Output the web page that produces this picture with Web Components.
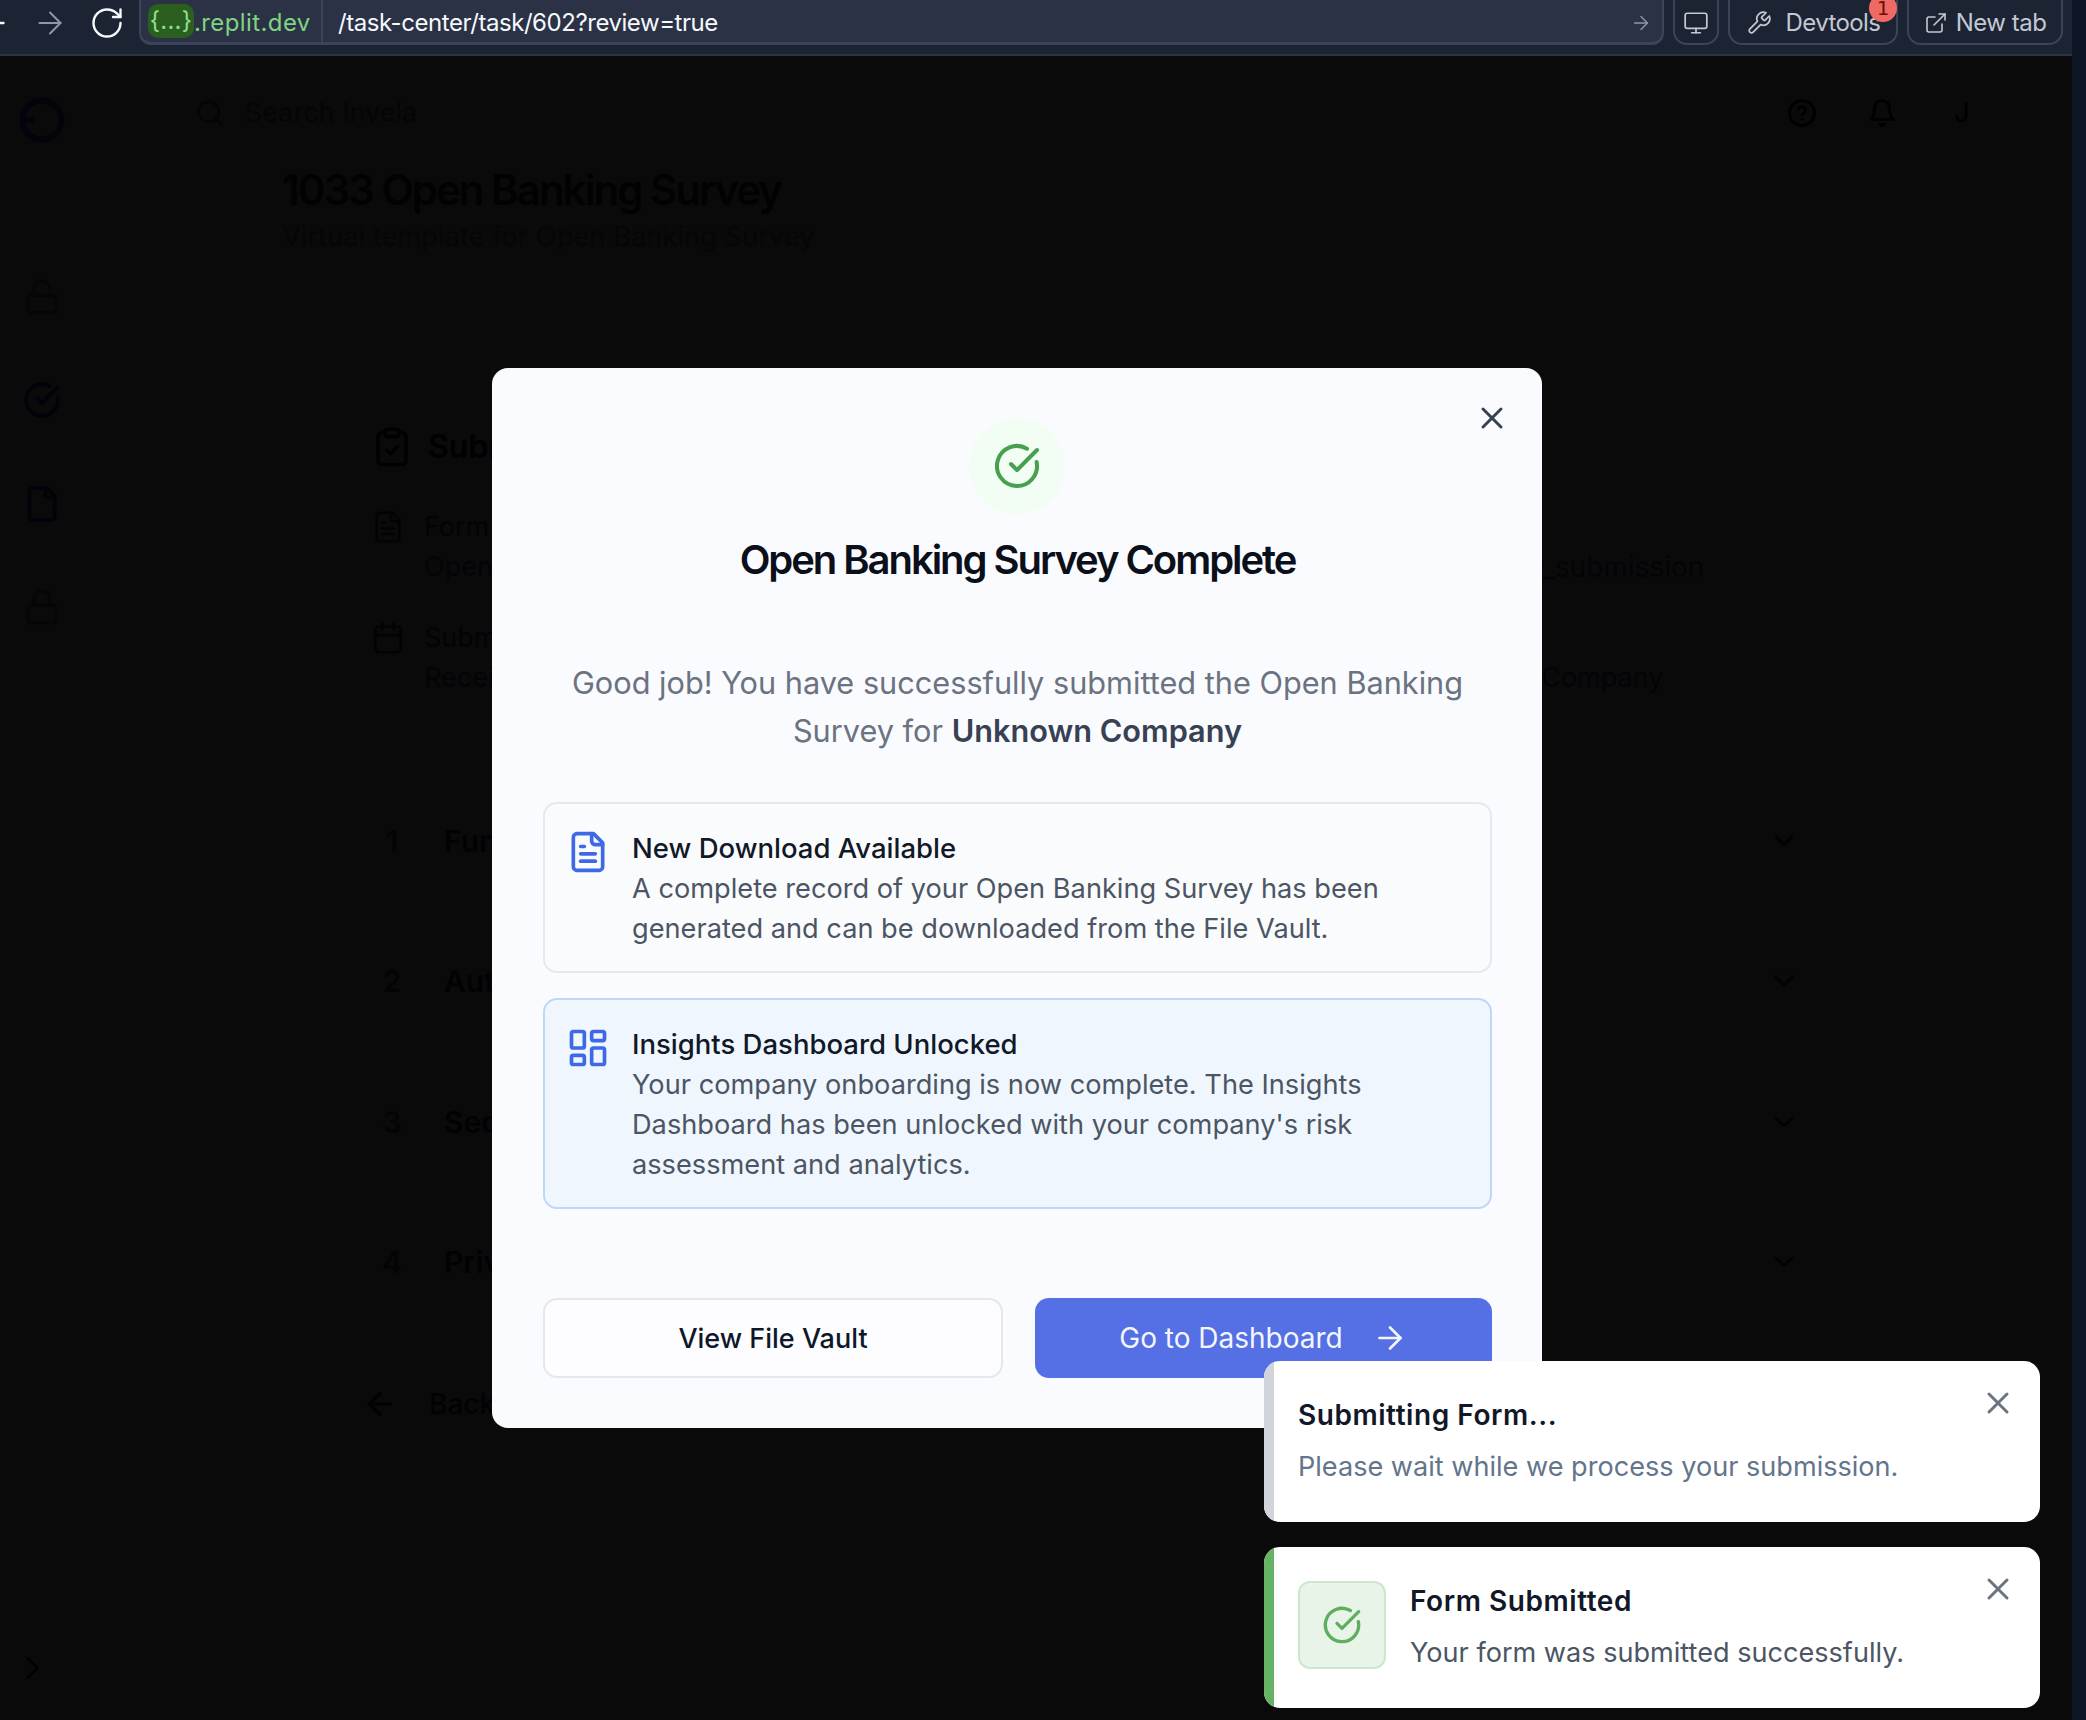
<!DOCTYPE html>
<html lang="en"><head><meta charset="utf-8"><title>Open Banking Survey</title>
<style>
html,body{margin:0;padding:0;background:#0e1525;height:100%;overflow:hidden}
body{font-family:Inter,"Noto Sans",sans-serif}
</style></head><body>
<app-root>
  <browser-bar slot="bar"></browser-bar>
  <side-nav slot="nav"></side-nav>
  <page-main slot="main"></page-main>
  <success-modal slot="over"></success-modal>
  <toast-stack slot="over">
    <toast-card accent="#d1d5db" heading="Submitting Form...">Please wait while we process your submission.</toast-card>
    <toast-card accent="#66b366" heading="Form Submitted" success>Your form was submitted successfully.</toast-card>
  </toast-stack>
</app-root>
<script>
const P={
 check:'<path d="M21.801 10A10 10 0 1 1 17 3.335"/><path d="m9 11 3 3L22 4"/>',
 filetext:'<path d="M15 2H6a2 2 0 0 0-2 2v16a2 2 0 0 0 2 2h12a2 2 0 0 0 2-2V7Z"/><path d="M14 2v4a2 2 0 0 0 2 2h4"/><path d="M10 9H8"/><path d="M16 13H8"/><path d="M16 17H8"/>',
 dash:'<rect x="3" y="3" width="7" height="9" rx="1"/><rect x="14" y="3" width="7" height="5" rx="1"/><rect x="14" y="12" width="7" height="9" rx="1"/><rect x="3" y="16" width="7" height="5" rx="1"/>',
 x:'<path d="M18 6 6 18"/><path d="m6 6 12 12"/>',
 right:'<path d="M5 12h14"/><path d="m12 5 7 7-7 7"/>',
 left:'<path d="m12 19-7-7 7-7"/><path d="M19 12H5"/>',
 reload:'<path d="M21 12a9 9 0 1 1-9-9c2.52 0 4.93 1 6.74 2.74L21 8"/><path d="M21 3v5h-5"/>',
 monitor:'<rect x="2" y="3" width="20" height="14" rx="2"/><path d="M8 21h8"/><path d="M12 17v4"/>',
 wrench:'<path d="M14.7 6.3a1 1 0 0 0 0 1.4l1.6 1.6a1 1 0 0 0 1.4 0l3.77-3.77a6 6 0 0 1-7.94 7.94l-6.91 6.91a2.12 2.12 0 0 1-3-3l6.91-6.91a6 6 0 0 1 7.94-7.94l-3.76 3.76z"/>',
 ext:'<path d="M15 3h6v6"/><path d="M10 14 21 3"/><path d="M18 13v6a2 2 0 0 1-2 2H5a2 2 0 0 1-2-2V8a2 2 0 0 1 2-2h6"/>',
 lock:'<rect x="3" y="11" width="18" height="11" rx="2"/><path d="M7 11V7a5 5 0 0 1 10 0v4"/>',
 file:'<path d="M15 2H6a2 2 0 0 0-2 2v16a2 2 0 0 0 2 2h12a2 2 0 0 0 2-2V7Z"/><path d="M14 2v4a2 2 0 0 0 2 2h4"/>',
 clip:'<rect x="8" y="2" width="8" height="4" rx="1"/><path d="M16 4h2a2 2 0 0 1 2 2v14a2 2 0 0 1-2 2H6a2 2 0 0 1-2-2V6a2 2 0 0 1 2-2h2"/><path d="m9 14 2 2 4-4"/>',
 cal:'<path d="M8 2v4"/><path d="M16 2v4"/><rect x="3" y="4" width="18" height="18" rx="2"/><path d="M3 10h18"/>',
 search:'<circle cx="11" cy="11" r="8"/><path d="m21 21-4.3-4.3"/>',
 help:'<circle cx="12" cy="12" r="10"/><path d="M9.09 9a3 3 0 0 1 5.83 1c0 2-3 3-3 3"/><path d="M12 17h.01"/>',
 bell:'<path d="M6 8a6 6 0 0 1 12 0c0 7 3 9 3 9H3s3-2 3-9"/><path d="M10.3 21a1.94 1.94 0 0 0 3.4 0"/>',
 down:'<path d="m6 9 6 6 6-6"/>',
 chev:'<path d="m9 18 6-6-6-6"/>',
 logo:'<path d="M3.2 14A9 9 0 1 0 3.2 10"/><path d="M3 12h4"/>'
};
function def(name,html,extra){
  const t=document.createElement('template');t.innerHTML=html;
  customElements.define(name,class extends HTMLElement{
    constructor(){super();this.attachShadow({mode:'open'});
      if(extra&&extra.build){this.shadowRoot.innerHTML=extra.build(this);}
      else this.shadowRoot.appendChild(t.content.cloneNode(true));}
  });
}
customElements.define('x-icon',class extends HTMLElement{
  constructor(){super();this.attachShadow({mode:'open'});}
  connectedCallback(){
    const s=this.getAttribute('size')||24,w=this.getAttribute('stroke')||2;
    this.shadowRoot.innerHTML=`<style>:host{display:inline-flex;flex:none;width:${s}px;height:${s}px}svg{display:block}</style><svg xmlns="http://www.w3.org/2000/svg" width="${s}" height="${s}" viewBox="0 0 24 24" fill="none" stroke="currentColor" stroke-width="${w}" stroke-linecap="round" stroke-linejoin="round">${P[this.getAttribute('name')]}</svg>`;
  }
});

def('app-root',`<style>
:host{display:block;position:relative;width:2086px;height:1720px;background:#0e1525;overflow:hidden}
.frame{width:2072px;height:1720px;display:grid;grid-template-rows:56px 1fr;grid-template-columns:172px 1fr;background:#0a0a0a}
.bar{grid-column:1/3}
</style><div class="frame"><div class="bar"><slot name="bar"></slot></div><slot name="nav"></slot><slot name="main"></slot></div><slot name="over"></slot>`);

def('browser-bar',`<style>
:host{display:flex;align-items:flex-start;box-sizing:border-box;height:56px;background:#1c2333;border-bottom:2px solid #2b3245;color:#f5f9fc;font:400 24px/1 Inter,sans-serif;overflow:visible}
.nav{display:flex;align-items:center;height:45px}
.back{margin-left:-25px;color:#f5f9fc}
.fwd{margin-left:21px;color:#8f96a6}
.rel{margin-left:21px;margin-right:14px;color:#f5f9fc}
.url{box-sizing:border-box;width:1525px;height:45px;background:#2b3245;border:solid #3c445c;border-width:0 2px 3px 2px;border-radius:0 0 12px 12px;display:flex;align-items:center;color:#f5f9fc;padding-top:3px}
.dom{display:flex;align-items:center;padding-left:7px;width:182px;box-sizing:border-box;border-right:2px solid #3c445c;color:#7fd483;flex:none;letter-spacing:.4px;margin-top:-3px;padding-top:3px;height:calc(100% + 3px)}
.chip{background:#2b5f20;color:#8ee08e;border-radius:10px;height:34px;width:46px;display:flex;align-items:center;justify-content:center;font-size:24px;margin-top:-3px;letter-spacing:.3px}
.path{padding-left:15px;flex:1;letter-spacing:-.45px}
.go{color:#8f96a6;margin-right:10px}
.btn{box-sizing:border-box;height:45px;border:solid #3c445c;border-width:0 2px 2px 2px;border-radius:0 0 14px 14px;display:flex;align-items:center;justify-content:center;color:#c2c8d4;margin-left:9px;position:relative;padding-top:2px}
.mon{width:46px}.dev{width:170px;gap:14px;letter-spacing:-.6px}.new{width:156px;gap:8px;letter-spacing:-.5px}
.badge{position:absolute;right:-1px;top:-6px;width:28px;height:28px;border-radius:50%;background:#ef6a63;color:#6e0f0c;font:400 20px/16px "DejaVu Sans",sans-serif;letter-spacing:0;display:flex;align-items:center;justify-content:center}
</style>
<div class="nav back"><x-icon name="left" size="36" stroke="1.6"></x-icon></div>
<div class="nav fwd"><x-icon name="right" size="36" stroke="1.4"></x-icon></div>
<div class="nav rel"><x-icon name="reload" size="36" stroke="1.6"></x-icon></div>
<div class="url"><div class="dom"><span class="chip">{...}</span>.replit.dev</div><div class="path">/task-center/task/602?review=true</div><x-icon class="go" name="right" size="22" stroke="1.6"></x-icon></div>
<div class="btn mon"><x-icon name="monitor" size="26" stroke="1.6"></x-icon></div>
<div class="btn dev"><x-icon name="wrench" size="26" stroke="1.6"></x-icon><span>Devtools</span><span class="badge">1</span></div>
<div class="btn new"><x-icon name="ext" size="24" stroke="1.6"></x-icon><span>New tab</span></div>`);

def('side-nav',`<style>
:host{display:flex;flex-direction:column;align-items:center;width:84px;height:1664px;color:#02030a;position:relative}
.logo{margin-top:38px;color:#02030c}
.i{height:103.5px;display:flex;align-items:center;justify-content:center}
.f{margin-top:99px}
.lk{color:#060607}
.ch{margin-top:auto;margin-bottom:33px;margin-left:-18px;color:#000}
</style>
<x-icon class="logo" name="logo" size="52" stroke="2.6"></x-icon>
<div class="i f lk"><x-icon name="lock" size="38" stroke="2"></x-icon></div>
<div class="i"><x-icon name="check" size="38" stroke="2.4"></x-icon></div>
<div class="i"><x-icon name="file" size="38" stroke="2.4"></x-icon></div>
<div class="i lk"><x-icon name="lock" size="38" stroke="2"></x-icon></div>
<x-icon class="ch" name="chev" size="38" stroke="1.6"></x-icon>`);

def('page-main',`<style>
:host{display:block;min-width:0;color:#000;font:400 27px/40px Inter,sans-serif}
.top{height:86px;margin-top:14px;display:flex;align-items:center;padding:0 0 0 23px;gap:20px;position:relative;color:#050507;font-size:27px}
.top .s{color:#050507}
.right{margin-left:auto;display:flex;align-items:center;gap:50px;margin-right:95px;color:#000}
.j{width:30px;text-align:center}
.title{margin:0 0 0 110px;font:600 42px/50px Inter,sans-serif;color:#020204;letter-spacing:-2px;padding-top:9px}
.sub{margin:0 0 0 110px;color:#060608;padding-top:1px;line-height:42px;height:43px;font-size:27.3px}
.cards{margin:119px 240px 0 160px;display:flex;flex-direction:column}
</style>
<div class="top"><x-icon class="s" name="search" size="30" stroke="2"></x-icon><span>Search Invela</span>
 <div class="right"><x-icon name="help" size="30" stroke="2.2"></x-icon><x-icon name="bell" size="30" stroke="2.2"></x-icon><span class="j">J</span></div></div>
<h1 class="title">1033 Open Banking Survey</h1>
<p class="sub">Virtual template for Open Banking Survey</p>
<div class="cards">
 <summary-card></summary-card>
 <section-row n="1" style="margin-top:47px">Functionality</section-row>
 <section-row n="2">Authentication</section-row>
 <section-row n="3">Security</section-row>
 <section-row n="4">Privacy</section-row>
 <back-link></back-link>
</div>`);

def('summary-card',`<style>
:host{display:block;box-sizing:border-box;height:361px;border:1px solid #0c0c0c;border-radius:16px;padding:48px 0 0 38px;color:#030306}
.h{display:flex;align-items:center;gap:15px;font:600 32px/40px Inter,sans-serif;height:40px;color:#010103}
.g{display:grid;grid-template-columns:1fr 414px;margin-top:40px;row-gap:31px}
.c{display:flex;gap:19px}.c x-icon{margin:3px 0 0 0}
.c b{font-weight:400;display:block;color:#030306}.c span{display:block;height:40px;white-space:nowrap;color:#040408}
.c span.a{font-size:28px;margin-left:5px}.c span.u{margin-left:-4px}
</style>
<div class="h"><x-icon name="clip" size="42" stroke="1.9"></x-icon><span>Submission Details</span></div>
<div class="g">
 <div class="c"><x-icon name="filetext" size="34" stroke="1.8"></x-icon><div><b>Form</b><span>Open Banking Survey</span></div></div>
 <div class="c"><div><b>Type</b><span class="a">company_submission</span></div></div>
 <div class="c"><x-icon name="cal" size="34" stroke="1.8"></x-icon><div><b>Submitted</b><span>Received</span></div></div>
 <div class="c"><div><b>By</b><span class="u">Unknown Company</span></div></div>
</div>`);

def('section-row','',{build:el=>`<style>
:host{display:flex;align-items:center;box-sizing:border-box;height:110px;margin-top:30.3px;border:1px solid #0c0c0c;border-radius:16px;padding:0 31px 0 39px;color:#020204;font:600 30px/1 Inter,sans-serif}
.n{width:40px;margin-right:32px;text-align:center;color:#040406}
.t{flex:1}
</style><span class="n">${el.getAttribute('n')}</span><span class="t"><slot></slot></span><x-icon name="down" size="32" stroke="2"></x-icon>`});

def('back-link',`<style>
:host{display:flex;align-items:center;gap:31px;margin-top:69px;padding-left:30px;color:#020204;font:500 28px/36px Inter,sans-serif}
</style><x-icon name="left" size="36" stroke="2"></x-icon><span>Back</span>`);

def('success-modal',`<style>
:host{position:absolute;left:492px;top:368px;box-sizing:border-box;width:1050px;height:1060px;background:#f9fbff;border-radius:16px;padding:50px 50px 0 51px;display:flex;flex-direction:column;align-items:stretch;font-family:Inter,sans-serif}
.close{position:absolute;right:32px;top:32px;color:#374151}
.circle{width:96px;height:96px;border-radius:50%;background:#f2fdf3;color:#46a050;display:flex;align-items:center;justify-content:center;align-self:center;margin-right:1px}
h2{margin:16px 0 0;text-align:center;font:600 40px/60px Inter,sans-serif;letter-spacing:-2.05px;color:#0b0f19}
p{margin:69px 0 0;text-align:center;font:400 30.7px/48px Inter,sans-serif;color:#6b7280}
p b{font-weight:600;color:#374151}
.cards{display:flex;flex-direction:column;gap:25px;margin-top:47px}
.actions{display:grid;grid-template-columns:460px 457px;justify-content:space-between;margin-top:89px}
</style>
<x-icon class="close" name="x" size="36" stroke="2"></x-icon>
<div class="circle"><x-icon name="check" size="48" stroke="2"></x-icon></div>
<h2>Open Banking Survey Complete</h2>
<p>Good job! You have successfully submitted the Open Banking Survey for <b>Unknown Company</b></p>
<div class="cards">
<info-card icon="filetext" heading="New Download Available">A complete record of your Open Banking Survey has been generated and can be downloaded from the File Vault.</info-card>
<info-card icon="dash" tone="blue" heading="Insights Dashboard Unlocked">Your company onboarding is now complete. The Insights Dashboard has been unlocked with your company's risk assessment and analytics.</info-card>
</div>
<div class="actions"><action-btn>View File Vault</action-btn><action-btn primary>Go to Dashboard</action-btn></div>`);

def('info-card','',{build:el=>{const b=el.getAttribute('tone')==='blue';return `<style>
:host{display:flex;box-sizing:border-box;border:2px solid ${b?'#bfd7fb':'#e5e9ef'};background:${b?'#f0f6fe':'#fafbfd'};border-radius:14px;padding:25px 30px 22px 21px;gap:22px}
x-icon{color:#3f68e6;margin-top:1px}
.t{font:500 27.5px/38px Inter,sans-serif;color:#111827;margin-bottom:2px}
.d{font:400 27.2px/40px Inter,sans-serif;color:#4b5563}
</style><x-icon name="${el.getAttribute('icon')}" size="44" stroke="2"></x-icon><div><div class="t">${el.getAttribute('heading')}</div><div class="d"><slot></slot></div></div>`}});

def('action-btn','',{build:el=>{const p=el.hasAttribute('primary');return `<style>
:host{display:flex;align-items:center;justify-content:center;gap:29px;box-sizing:border-box;height:80px;border-radius:14px;font:${p?'400 28px':'500 27px'}/1 Inter,sans-serif;${p?'background:#5470e4;color:#f4f6ff;':'background:#fdfdff;border:2px solid #e4e7ec;color:#0f172a;'}}
</style><span><slot></slot></span>${p?'<x-icon name="right" size="36" stroke="1.8"></x-icon>':''}`}});

def('toast-stack',`<style>
:host{position:absolute;left:1264px;top:1361px;width:776px;display:flex;flex-direction:column;gap:25px}
</style><slot></slot>`);

def('toast-card','',{build:el=>{const s=el.hasAttribute('success');return `<style>
:host{display:flex;position:relative;box-sizing:border-box;height:161px;background:#fff;border-radius:16px;overflow:hidden;font-family:Inter,sans-serif}
.a{width:10px;background:${el.getAttribute('accent')};flex:none}
.in{display:flex;flex:1;padding:34px 24px 0 24px;gap:24px;align-items:flex-start}
.box{width:88px;height:88px;box-sizing:border-box;border:2px solid #cde6cd;background:#e9f4e9;border-radius:12px;color:#5fae5f;display:flex;align-items:center;justify-content:center}
.t{font:600 28px/40px Inter,sans-serif;color:#111827;letter-spacing:.55px}
.d{font:400 27.1px/40px Inter,sans-serif;color:${s?'#4b5563':'#64748b'};margin-top:12px}
.x{position:absolute;right:24px;top:24px;color:#6b7280}
</style><div class="a"></div><div class="in">${s?'<div class="box"><x-icon name="check" size="40" stroke="2"></x-icon></div>':''}<div><div class="t">${el.getAttribute('heading')}</div><div class="d"><slot></slot></div></div></div><x-icon class="x" name="x" size="36" stroke="2"></x-icon>`}});
</script>
</body></html>
